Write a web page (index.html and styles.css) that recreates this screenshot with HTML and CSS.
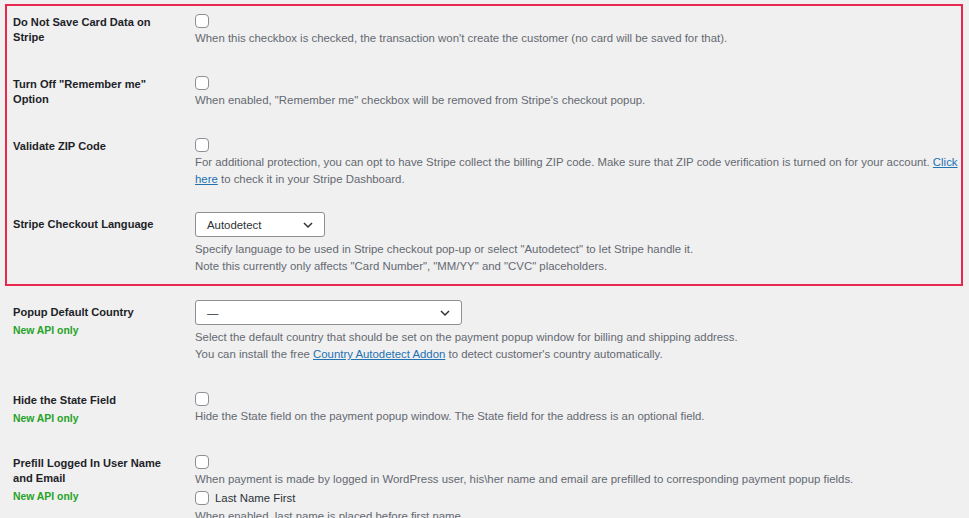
FILE: index.html
```html
<!DOCTYPE html>
<html lang="en">
<head>
    <meta charset="UTF-8">
    <title>Stripe Payments - Settings</title>
    <link rel="stylesheet" href="styles.css">
</head>
<body>
    <div class="wrap">
        <div class="highlight">
            <div class="row first">
                <div class="label">Do Not Save Card Data on<br>Stripe</div>
                <div class="field">
                    <input type="checkbox" class="check">
                    <p class="desc">When this checkbox is checked, the transaction won't create the customer (no card will be saved for that).</p>
                </div>
            </div>
            <div class="row">
                <div class="label">Turn Off "Remember me"<br>Option</div>
                <div class="field">
                    <input type="checkbox" class="check">
                    <p class="desc">When enabled, "Remember me" checkbox will be removed from Stripe's checkout popup.</p>
                </div>
            </div>
            <div class="row">
                <div class="label">Validate ZIP Code</div>
                <div class="field">
                    <input type="checkbox" class="check">
                    <p class="desc"><span class="nowrap">For additional protection, you can opt to have Stripe collect the billing ZIP code. Make sure that ZIP code verification is turned on for your account. <a href="#">Click</a></span><br><a href="#">here</a> to check it in your Stripe Dashboard.</p>
                </div>
            </div>
            <div class="row select-row last">
                <div class="label">Stripe Checkout Language</div>
                <div class="field">
                    <div class="select small">
                        <span>Autodetect</span>
                        <svg width="12" height="8" viewBox="0 0 12 8"><path d="M2 2 L6 6 L10 2" fill="none" stroke="#2c3338" stroke-width="1.5"/></svg>
                    </div>
                    <p class="desc">Specify language to be used in Stripe checkout pop-up or select "Autodetect" to let Stripe handle it.<br>Note this currently only affects "Card Number", "MM/YY" and "CVC" placeholders.</p>
                </div>
            </div>
        </div>

        <div class="row select-row outside">
            <div class="label">Popup Default Country<span class="api">New API only</span></div>
            <div class="field">
                <div class="select wide">
                    <span>&mdash;</span>
                    <svg width="12" height="8" viewBox="0 0 12 8"><path d="M2 2 L6 6 L10 2" fill="none" stroke="#2c3338" stroke-width="1.5"/></svg>
                </div>
                <p class="desc">Select the default country that should be set on the payment popup window for billing and shipping address.<br>You can install the free <a href="#">Country Autodetect Addon</a> to detect customer's country automatically.</p>
            </div>
        </div>
        <div class="row outside">
            <div class="label">Hide the State Field<span class="api">New API only</span></div>
            <div class="field">
                <input type="checkbox" class="check">
                <p class="desc">Hide the State field on the payment popup window. The State field for the address is an optional field.</p>
            </div>
        </div>
        <div class="row outside">
            <div class="label">Prefill Logged In User Name<br>and Email<span class="api">New API only</span></div>
            <div class="field">
                <input type="checkbox" class="check">
                <p class="desc">When payment is made by logged in WordPress user, his\her name and email are prefilled to corresponding payment popup fields.</p>
                <label class="sub-check"><input type="checkbox" class="check"> Last Name First</label>
                <p class="desc after-sub">When enabled, last name is placed before first name.</p>
            </div>
        </div>
    </div>
</body>
</html>
```

FILE: styles.css
```css
body {
    margin: 0;
    background-color: #f0f0f1;
    font-family: "Liberation Sans", Arial, sans-serif;
    color: #1d2327;
    font-size: 11.4px;
}
.wrap {
    padding: 4px 6px 0 5px;
}
.highlight {
    border: 2px solid #e8284f;
}
.row {
    display: flex;
    padding: 14px 0 15px 6px;
}
.row.first {
    padding-top: 8px;
}
.row.select-row {
    padding-top: 9px;
}
.row.last {
    padding-bottom: 9px;
}
.row.outside {
    padding-left: 8px;
}
.row.select-row.outside {
    padding-top: 14px;
}
.label {
    width: 182px;
    flex-shrink: 0;
    font-size: 11.1px;
    font-weight: bold;
    line-height: 15px;
    padding-top: 1px;
    color: #1d2327;
}
.select-row .label {
    padding-top: 5px;
}
.api {
    display: block;
    margin-top: 3px;
    color: #25a325;
    font-size: 10.4px;
}
.field {
    flex: 1;
    min-width: 0;
}
.nowrap {
    white-space: nowrap;
}
.check {
    appearance: none;
    -webkit-appearance: none;
    display: block;
    width: 14px;
    height: 14px;
    margin: 0;
    background-color: #fff;
    border: 1px solid #8c8f94;
    border-radius: 4px;
}
.desc {
    margin: 2px 0 0;
    color: #646970;
    line-height: 17px;
}
.desc a {
    color: #2271b1;
}
.select {
    display: flex;
    align-items: center;
    justify-content: space-between;
    box-sizing: border-box;
    height: 25px;
    padding: 0 10px 0 11px;
    background-color: #fff;
    border: 1px solid #8c8f94;
    border-radius: 3px;
    color: #2c3338;
}
.select.small {
    width: 130px;
}
.select.wide {
    width: 267px;
}
.select-row .desc {
    margin-top: 4px;
}
.sub-check {
    display: flex;
    align-items: center;
    gap: 6px;
    margin-top: 3px;
    color: #2c3338;
}
.desc.after-sub {
    margin-top: 3px;
}
```
